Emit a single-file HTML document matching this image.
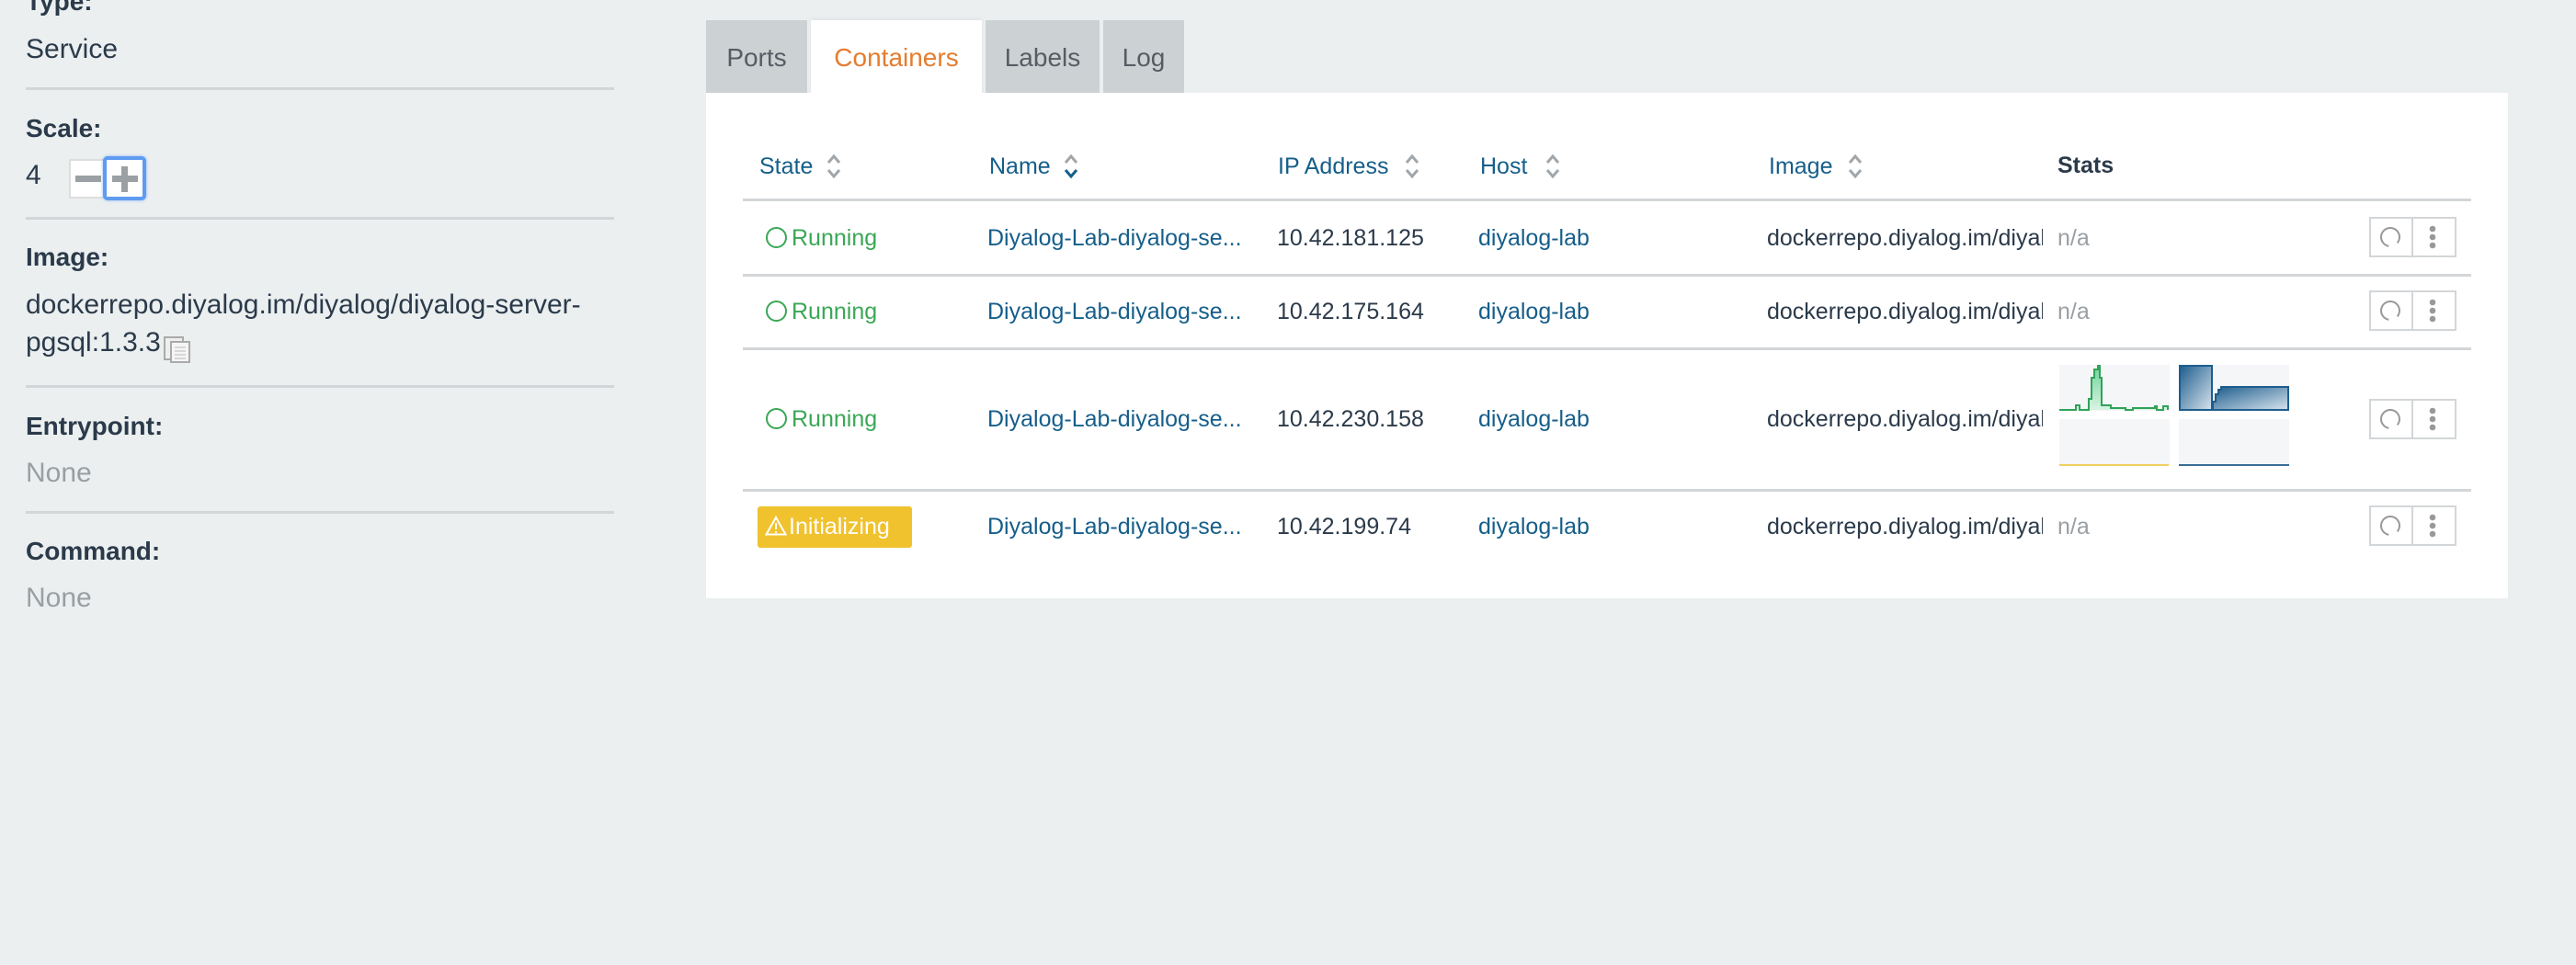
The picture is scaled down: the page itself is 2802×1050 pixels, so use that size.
<!DOCTYPE html>
<html><head><style>
*{margin:0;padding:0;box-sizing:border-box}
body{width:2802px;height:1050px;background:#ebeff0;font-family:"Liberation Sans",sans-serif;position:relative;overflow:hidden;color:#2b3a4a}
.a{position:absolute;white-space:nowrap}
.lbl{font-size:28px;font-weight:bold;color:#2b3a4a;left:28px}
.val{font-size:30px;color:#2b3a4a;left:28px}
.none{color:#9a9fa3}
.hr{position:absolute;left:28px;width:640px;height:3px;background:#d3d6d8}
.tab{position:absolute;top:22px;height:79px;background:#ccd1d4;font-size:28px;color:#555d63;text-align:center;line-height:82px}
.th{font-size:25px;color:#155e8a}
.td{font-size:25px}
.lnk{color:#155e8a}
.grn{color:#3aa755}
.rl{position:absolute;left:808px;width:1880px;height:3px;background:#d3d6d8}
.btn{position:absolute;left:2577px;width:95px;height:44px;border:2px solid #d3d6d8;background:#fff}
.btn:after{content:"";position:absolute;left:44px;top:0;width:2px;height:40px;background:#d3d6d8}
.ci{display:inline-block;width:23px;height:23px;border:2px solid #3aa755;border-radius:50%;vertical-align:-3px;margin-right:5px}
</style></head><body>
<div class="a lbl" style="top:-14px">Type:</div>
<div class="a val" style="top:37px">Service</div>
<div class="hr" style="top:95px"></div>
<div class="a lbl" style="top:124px">Scale:</div>
<div class="a val" style="top:174px">4</div>
<div class="a" style="left:75px;top:173px;width:42px;height:43px;background:#fff;border:2px solid #ddd"></div>
<div class="a" style="left:82px;top:191px;width:28px;height:7px;background:#9aa0a4"></div>
<div class="a" style="left:112px;top:170px;width:47px;height:48px;background:#fff;border:4px solid #5f9bf0;border-radius:5px;box-shadow:0 0 3px #8ab4f8"></div>
<div class="a" style="left:122px;top:191px;width:28px;height:7px;background:#9aa0a4"></div>
<div class="a" style="left:132px;top:181px;width:7px;height:28px;background:#9aa0a4"></div>
<div class="hr" style="top:236px"></div>
<div class="a lbl" style="top:264px">Image:</div>
<div class="a val" style="top:315px">dockerrepo.diyalog.im/diyalog/diyalog-server-</div>
<div class="a val" style="top:356px">pgsql:1.3.3</div>
<svg class="a" style="left:178px;top:363px" width="30" height="32"><rect x="1" y="4" width="20" height="24" fill="#eee" stroke="#aaa" stroke-width="2"/><rect x="8" y="9" width="20" height="22" fill="#f5f5f5" stroke="#aaa" stroke-width="2"/><path d="M12 15h12M12 19h12M12 23h12M12 27h12" stroke="#bbb"/></svg>
<div class="hr" style="top:419px"></div>
<div class="a lbl" style="top:448px">Entrypoint:</div>
<div class="a val none" style="top:498px">None</div>
<div class="hr" style="top:556px"></div>
<div class="a lbl" style="top:584px">Command:</div>
<div class="a val none" style="top:634px">None</div>

<div class="tab" style="left:768px;width:110px">Ports</div>
<div class="tab" style="left:882px;width:186px;background:#fff;color:#e57c2e;height:82px;box-shadow:0 -2px 4px rgba(0,0,0,.05)">Containers</div>
<div class="tab" style="left:1072px;width:124px">Labels</div>
<div class="tab" style="left:1200px;width:88px">Log</div>
<div class="a" style="left:768px;top:101px;width:1960px;height:550px;background:#fff"></div>

<div class="a th" style="left:826px;top:167px">State</div>
<div class="a th" style="left:1076px;top:167px">Name</div>
<div class="a th" style="left:1390px;top:167px">IP Address</div>
<div class="a th" style="left:1610px;top:167px">Host</div>
<div class="a th" style="left:1924px;top:167px">Image</div>
<div class="a td" style="left:2238px;top:166px;font-weight:bold">Stats</div>
<svg class="a" style="left:898px;top:166px" width="18" height="30"><path d="M3 11l6-7 6 7M3 19l6 7 6-7" fill="none" stroke="#a0a6aa" stroke-width="3"/></svg>
<svg class="a" style="left:1156px;top:166px" width="18" height="30"><path d="M3 11l6-7 6 7" fill="none" stroke="#a0a6aa" stroke-width="3"/><path d="M3 19l6 7 6-7" fill="none" stroke="#155e8a" stroke-width="3"/></svg>
<svg class="a" style="left:1527px;top:166px" width="18" height="30"><path d="M3 11l6-7 6 7M3 19l6 7 6-7" fill="none" stroke="#a0a6aa" stroke-width="3"/></svg>
<svg class="a" style="left:1680px;top:166px" width="18" height="30"><path d="M3 11l6-7 6 7M3 19l6 7 6-7" fill="none" stroke="#a0a6aa" stroke-width="3"/></svg>
<svg class="a" style="left:2009px;top:166px" width="18" height="30"><path d="M3 11l6-7 6 7M3 19l6 7 6-7" fill="none" stroke="#a0a6aa" stroke-width="3"/></svg>
<div class="rl" style="top:216px"></div>

<div class="a td grn" style="left:833px;top:245px"><span class="ci"></span>Running</div>
<div class="a td lnk" style="left:1074px;top:245px">Diyalog-Lab-diyalog-se...</div>
<div class="a td" style="left:1389px;top:245px">10.42.181.125</div>
<div class="a td lnk" style="left:1608px;top:245px">diyalog-lab</div>
<div class="a td" style="left:1922px;top:245px;width:300px;overflow:hidden">dockerrepo.diyalog.im/diyalog</div>
<div class="a td none" style="left:2238px;top:245px">n/a</div>
<div class="btn" style="top:236px"></div>
<div class="rl" style="top:298px"></div>

<div class="a td grn" style="left:833px;top:325px"><span class="ci"></span>Running</div>
<div class="a td lnk" style="left:1074px;top:325px">Diyalog-Lab-diyalog-se...</div>
<div class="a td" style="left:1389px;top:325px">10.42.175.164</div>
<div class="a td lnk" style="left:1608px;top:325px">diyalog-lab</div>
<div class="a td" style="left:1922px;top:325px;width:300px;overflow:hidden">dockerrepo.diyalog.im/diyalog</div>
<div class="a td none" style="left:2238px;top:325px">n/a</div>
<div class="btn" style="top:316px"></div>
<div class="rl" style="top:378px"></div>

<div class="a td grn" style="left:833px;top:442px"><span class="ci"></span>Running</div>
<div class="a td lnk" style="left:1074px;top:442px">Diyalog-Lab-diyalog-se...</div>
<div class="a td" style="left:1389px;top:442px">10.42.230.158</div>
<div class="a td lnk" style="left:1608px;top:442px">diyalog-lab</div>
<div class="a td" style="left:1922px;top:442px;width:300px;overflow:hidden">dockerrepo.diyalog.im/diyalog</div>
<svg class="a" style="left:2240px;top:397px" width="252" height="112">
<defs><linearGradient id="g1" x1="0" y1="0" x2="0" y2="1"><stop offset="0" stop-color="#6fd39a"/><stop offset="1" stop-color="#d9f3e3"/></linearGradient><linearGradient id="g2" x1="0" y1="0" x2="1" y2="1"><stop offset="0" stop-color="#1d5d8d"/><stop offset="1" stop-color="#d8e4ee"/></linearGradient></defs>
<rect x="0" y="0" width="120" height="50" fill="#f4f6f8"/>
<rect x="130" y="0" width="120" height="50" fill="#f4f6f8"/>
<rect x="0" y="59" width="120" height="50" fill="#f4f6f8"/>
<rect x="130" y="59" width="120" height="50" fill="#f4f6f8"/>
<path d="M0 49H18V44H22V49H32V37H35V14H38V5H42V1H44V14H46V44H56V47H72V49H80V47H104V45H106V49H113V45H118V49" fill="url(#g1)" stroke="#2fa358" stroke-width="2"/>
<path d="M131 1H166V49H131Z" fill="url(#g2)" stroke="#1d5d8d" stroke-width="2"/>
<path d="M167 49V40H170V32H173V27H176V24H249V49Z" fill="url(#g2)" stroke="#1d5d8d" stroke-width="2"/>
<path d="M0 109H119" stroke="#f0d060" stroke-width="2"/>
<path d="M130 109H250" stroke="#3a6f98" stroke-width="2"/>
</svg>
<div class="btn" style="top:434px"></div>
<div class="rl" style="top:532px"></div>

<div class="a" style="left:824px;top:551px;width:168px;height:45px;background:#f0c22e;border-radius:3px"></div>
<div class="a td" style="left:832px;top:559px;color:#fff"><svg width="24" height="22" style="vertical-align:-2px;margin-right:2px"><path d="M12 2L1.5 20.5h21Z" fill="none" stroke="#fff" stroke-width="2"/><path d="M12 8v7M12 17v2" stroke="#fff" stroke-width="2"/></svg>Initializing</div>
<div class="a td lnk" style="left:1074px;top:559px">Diyalog-Lab-diyalog-se...</div>
<div class="a td" style="left:1389px;top:559px">10.42.199.74</div>
<div class="a td lnk" style="left:1608px;top:559px">diyalog-lab</div>
<div class="a td" style="left:1922px;top:559px;width:300px;overflow:hidden">dockerrepo.diyalog.im/diyalog</div>
<div class="a td none" style="left:2238px;top:559px">n/a</div>
<div class="btn" style="top:550px"></div>

<svg class="a" style="left:2577px;top:236px" width="95" height="44"><circle cx="23" cy="22" r="10" fill="none" stroke="#999" stroke-width="2" stroke-dasharray="52 12" transform="rotate(100 23 22)"/><circle cx="69" cy="13" r="3.3" fill="#999"/><circle cx="69" cy="22" r="3.3" fill="#999"/><circle cx="69" cy="31" r="3.3" fill="#999"/></svg>
<svg class="a" style="left:2577px;top:316px" width="95" height="44"><circle cx="23" cy="22" r="10" fill="none" stroke="#999" stroke-width="2" stroke-dasharray="52 12" transform="rotate(100 23 22)"/><circle cx="69" cy="13" r="3.3" fill="#999"/><circle cx="69" cy="22" r="3.3" fill="#999"/><circle cx="69" cy="31" r="3.3" fill="#999"/></svg>
<svg class="a" style="left:2577px;top:434px" width="95" height="44"><circle cx="23" cy="22" r="10" fill="none" stroke="#999" stroke-width="2" stroke-dasharray="52 12" transform="rotate(100 23 22)"/><circle cx="69" cy="13" r="3.3" fill="#999"/><circle cx="69" cy="22" r="3.3" fill="#999"/><circle cx="69" cy="31" r="3.3" fill="#999"/></svg>
<svg class="a" style="left:2577px;top:550px" width="95" height="44"><circle cx="23" cy="22" r="10" fill="none" stroke="#999" stroke-width="2" stroke-dasharray="52 12" transform="rotate(100 23 22)"/><circle cx="69" cy="13" r="3.3" fill="#999"/><circle cx="69" cy="22" r="3.3" fill="#999"/><circle cx="69" cy="31" r="3.3" fill="#999"/></svg>
</body></html>
